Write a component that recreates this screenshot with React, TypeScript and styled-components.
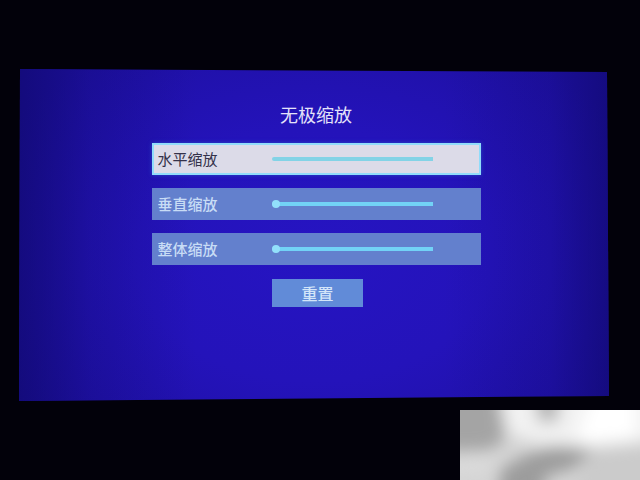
import React, { useState } from "react";
import styled, { createGlobalStyle } from "styled-components";

const GlobalStyle = createGlobalStyle`
  * { box-sizing: border-box; }
  body {
    margin: 0;
    background: #02010a;
    font-family: "Noto Sans CJK SC", "Noto Sans", sans-serif;
  }
`;

const Page = styled.div`
  position: relative;
  display: flex;
  min-height: 100vh;
  padding: 69px 31px 79px 19px;
  overflow: hidden;
`;

const Screen = styled.main`
  flex: 1;
  display: flex;
  flex-direction: column;
  align-items: center;
  padding: 31px 0 32px 4px;
  clip-path: polygon(1px 0, 588px 3px, 100% 327px, 0 100%);
  background:
    linear-gradient(90deg, rgba(14, 8, 104, 0.65), rgba(14, 8, 104, 0.25) 12%, rgba(14, 8, 104, 0) 30%, rgba(14, 8, 104, 0) 72%, rgba(14, 8, 104, 0.2) 90%, rgba(14, 8, 104, 0.6)),
    radial-gradient(ellipse 60% 76% at 50% 56%, #2614c2 0%, #2413ba 50%, #1e10a2 100%);
`;

const Title = styled.h1`
  margin: 0 0 15px;
  font-size: 18px;
  line-height: 28px;
  font-weight: 400;
  color: #e4e2fa;
`;

const Settings = styled.form`
  display: flex;
  flex-direction: column;
  align-items: center;
  gap: 13px;
  width: 100%;
  max-width: 329px;
`;

const Row = styled.div<{ $active: boolean }>`
  display: grid;
  grid-template-columns: 114px 161px 1fr;
  align-items: center;
  width: 100%;
  height: 32px;
  padding-left: 4px;
  border: 2px solid ${(p) => (p.$active ? "#91dcfa" : "transparent")};
  background: ${(p) => (p.$active ? "#dcdbe8" : "#6380cd")};
  background-clip: border-box;
  color: ${(p) => (p.$active ? "#34324a" : "#c8dcf5")};
  box-shadow: ${(p) => (p.$active ? "0 0 4px #2948c4" : "none")};
  font-weight: ${(p) => (p.$active ? 400 : 500)};
`;

const Label = styled.label`
  font-size: 15px;
  line-height: 24px;
  white-space: nowrap;
`;

const Slider = styled.input<{ $active: boolean }>`
  appearance: none;
  width: 100%;
  height: 8px;
  margin: 0;
  background: transparent;
  outline: none;
  cursor: pointer;

  &::-webkit-slider-runnable-track {
    height: 4px;
    border-radius: 2px 0 0 2px;
    background: ${(p) => (p.$active ? "#83d3e6" : "#72d2f6")};
  }

  &::-webkit-slider-thumb {
    appearance: none;
    width: 8px;
    height: 8px;
    margin-top: -2px;
    border-radius: 50%;
    background: ${(p) => (p.$active ? "transparent" : "#92e0fb")};
  }
`;

const ResetButton = styled.button`
  width: 91px;
  height: 28px;
  margin: 1px 0 0 3px;
  padding: 0;
  border: 0;
  background: #618bd8;
  color: #d3e5f9;
  font-family: inherit;
  font-size: 16px;
  line-height: 28px;
  font-weight: 500;
  cursor: pointer;
`;

const Corner = styled.svg`
  position: absolute;
  right: 0;
  bottom: 0;
  width: 180px;
  height: 70px;
`;

const rows = [
  { id: "horizontal", label: "水平缩放" },
  { id: "vertical", label: "垂直缩放" },
  { id: "overall", label: "整体缩放" },
];

const initial: Record<string, number> = { horizontal: 0, vertical: 0, overall: 0 };

export default function App() {
  const [values, setValues] = useState(initial);
  const [active, setActive] = useState("horizontal");

  return (
    <>
      <GlobalStyle />
      <Page>
        <Screen>
          <Title>无极缩放</Title>
          <Settings onSubmit={(e) => e.preventDefault()}>
            {rows.map(({ id, label }) => (
              <Row key={id} $active={active === id}>
                <Label htmlFor={id}>{label}</Label>
                <Slider
                  id={id}
                  type="range"
                  min={0}
                  max={100}
                  value={values[id]}
                  $active={active === id}
                  onFocus={() => setActive(id)}
                  onChange={(e) => setValues({ ...values, [id]: Number(e.target.value) })}
                />
              </Row>
            ))}
            <ResetButton type="button" onClick={() => setValues(initial)}>
              重置
            </ResetButton>
          </Settings>
        </Screen>
        <Corner viewBox="0 0 180 70" aria-hidden="true">
          <defs>
            <filter id="soft" x="-20%" y="-20%" width="140%" height="140%">
              <feGaussianBlur stdDeviation="8" />
            </filter>
          </defs>
          <rect width="180" height="70" fill="#d4d4d4" />
          <g filter="url(#soft)">
            <path d="M36 -30H210V30L125 36L80 34L48 24Z" fill="#f2f2f2" />
            <path d="M118 24L138 -30H176V28L128 36Z" fill="#ffffff" />
            <path d="M-30 -30H36L46 28L30 40L-30 42Z" fill="#a4a4a4" />
            <path d="M74 -20H100L98 12H78Z" fill="#b4b4b4" />
            <path d="M-30 48H42L26 62L-30 64Z" fill="#dcdcdc" />
            <path d="M40 100V60L68 44L96 36L134 40L114 58L86 66L78 100Z" fill="#9c9c9c" />
            <path d="M128 42L210 34V100H100L124 60Z" fill="#cbcbcb" />
          </g>
        </Corner>
      </Page>
    </>
  );
}
